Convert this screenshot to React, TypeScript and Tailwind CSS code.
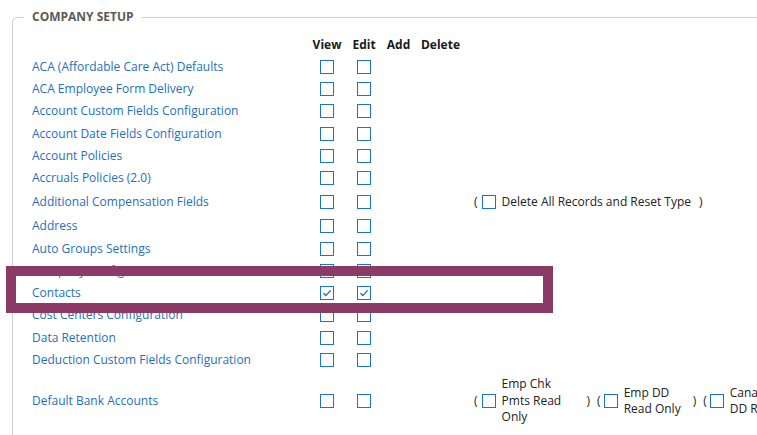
import React from "react"

type Row = {
  label: string
  h: string
  checked?: boolean
  extra?: "reset" | "bank"
}

const rows: Row[] = [
  { label: "ACA (Affordable Care Act) Defaults", h: "h-[22px]" },
  { label: "ACA Employee Form Delivery", h: "h-[22px]" },
  { label: "Account Custom Fields Configuration", h: "h-[22px]" },
  { label: "Account Date Fields Configuration", h: "h-[23px]" },
  { label: "Account Policies", h: "h-[22px]" },
  { label: "Accruals Policies (2.0)", h: "h-[22px]" },
  { label: "Additional Compensation Fields", h: "h-[26px]", extra: "reset" },
  { label: "Address", h: "h-[22px]" },
  { label: "Auto Groups Settings", h: "h-[23px]" },
  { label: "Company Configuration", h: "h-[22px]" },
  { label: "Contacts", h: "h-[22px]", checked: true },
  { label: "Cost Centers Configuration", h: "h-[22px]" },
  { label: "Data Retention", h: "h-[23px]" },
  { label: "Deduction Custom Fields Configuration", h: "h-[22px]" },
  { label: "Default Bank Accounts", h: "h-[60px]", extra: "bank" },
]

const cols = "grid grid-cols-[276px_38px_36px_33px_51px_1fr] items-center"

function Box({ checked }: { checked?: boolean }) {
  return (
    <span className="w-[14px] h-[14px] shrink-0 border border-[#1b74cc] bg-white flex items-center justify-center">
      {checked && (
        <svg width="10" height="10" viewBox="0 0 10 10" fill="none">
          <path d="M1.5 5.2 L3.9 7.6 L8.6 2.4" stroke="#1b6fc2" strokeWidth="1.4" />
        </svg>
      )}
    </span>
  )
}

function Extra({ kind }: { kind: "reset" | "bank" }) {
  if (kind === "reset") {
    return (
      <div className="flex items-center pl-[8px] text-[#222]">
        <span>(</span>
        <span className="ml-[4px]"><Box /></span>
        <span className="ml-[6px]">Delete All Records and Reset Type</span>
        <span className="ml-[8px]">)</span>
      </div>
    )
  }
  return (
    <div className="flex items-center pl-[8px] text-[#222] leading-[16.5px] whitespace-nowrap">
      <span>(</span>
      <span className="ml-[4px]"><Box /></span>
      <span className="ml-[6px] w-[66px] whitespace-normal">Emp Chk Pmts Read Only</span>
      <span className="ml-[19px]">)</span>
      <span className="ml-[7px]">(</span>
      <span className="ml-[3px]"><Box /></span>
      <span className="ml-[6px] w-[60px] whitespace-normal">Emp DD Read Only</span>
      <span className="ml-[9px]">)</span>
      <span className="ml-[7px]">(</span>
      <span className="ml-[3px]"><Box /></span>
      <span className="ml-[6px]">
        Canadian
        <br />
        DD Read Only
      </span>
    </div>
  )
}

export default function App() {
  return (
    <div className="relative w-[757px] h-[435px] overflow-hidden bg-white font-['Open_Sans','Noto_Sans',sans-serif] text-[12px]">
      <fieldset className="ml-[12px] mt-[9px] w-[800px] h-[500px] border border-[#cfcfcf] rounded-tl-[5px]">
        <legend className="ml-[11px] px-[8px] text-[12px] leading-[16px] font-bold text-[#5a5a5a]">COMPANY SETUP</legend>

        <div className="pl-[19px] mt-[8px]">
          <div className={`${cols} h-[23px] font-bold text-[#1a1a1a]`}>
            <span />
            <span className="text-center">View</span>
            <span className="text-center">Edit</span>
            <span className="text-center">Add</span>
            <span className="text-center">Delete</span>
            <span />
          </div>

          {rows.map((row) => (
            <div key={row.label} className={`${cols} ${row.h}`}>
              <span className="text-[#1e6fc0]">{row.label}</span>
              <span className="flex justify-center"><Box checked={row.checked} /></span>
              <span className="flex justify-center"><Box checked={row.checked} /></span>
              <span />
              <span />
              {row.extra ? <Extra kind={row.extra} /> : <span />}
            </div>
          ))}
        </div>
      </fieldset>

      {/* highlight around the Contacts row */}
      <div className="absolute left-[6px] top-[266px] w-[547px] h-[47px] border-[10px] border-[#8b3b66]" />
    </div>
  )
}
